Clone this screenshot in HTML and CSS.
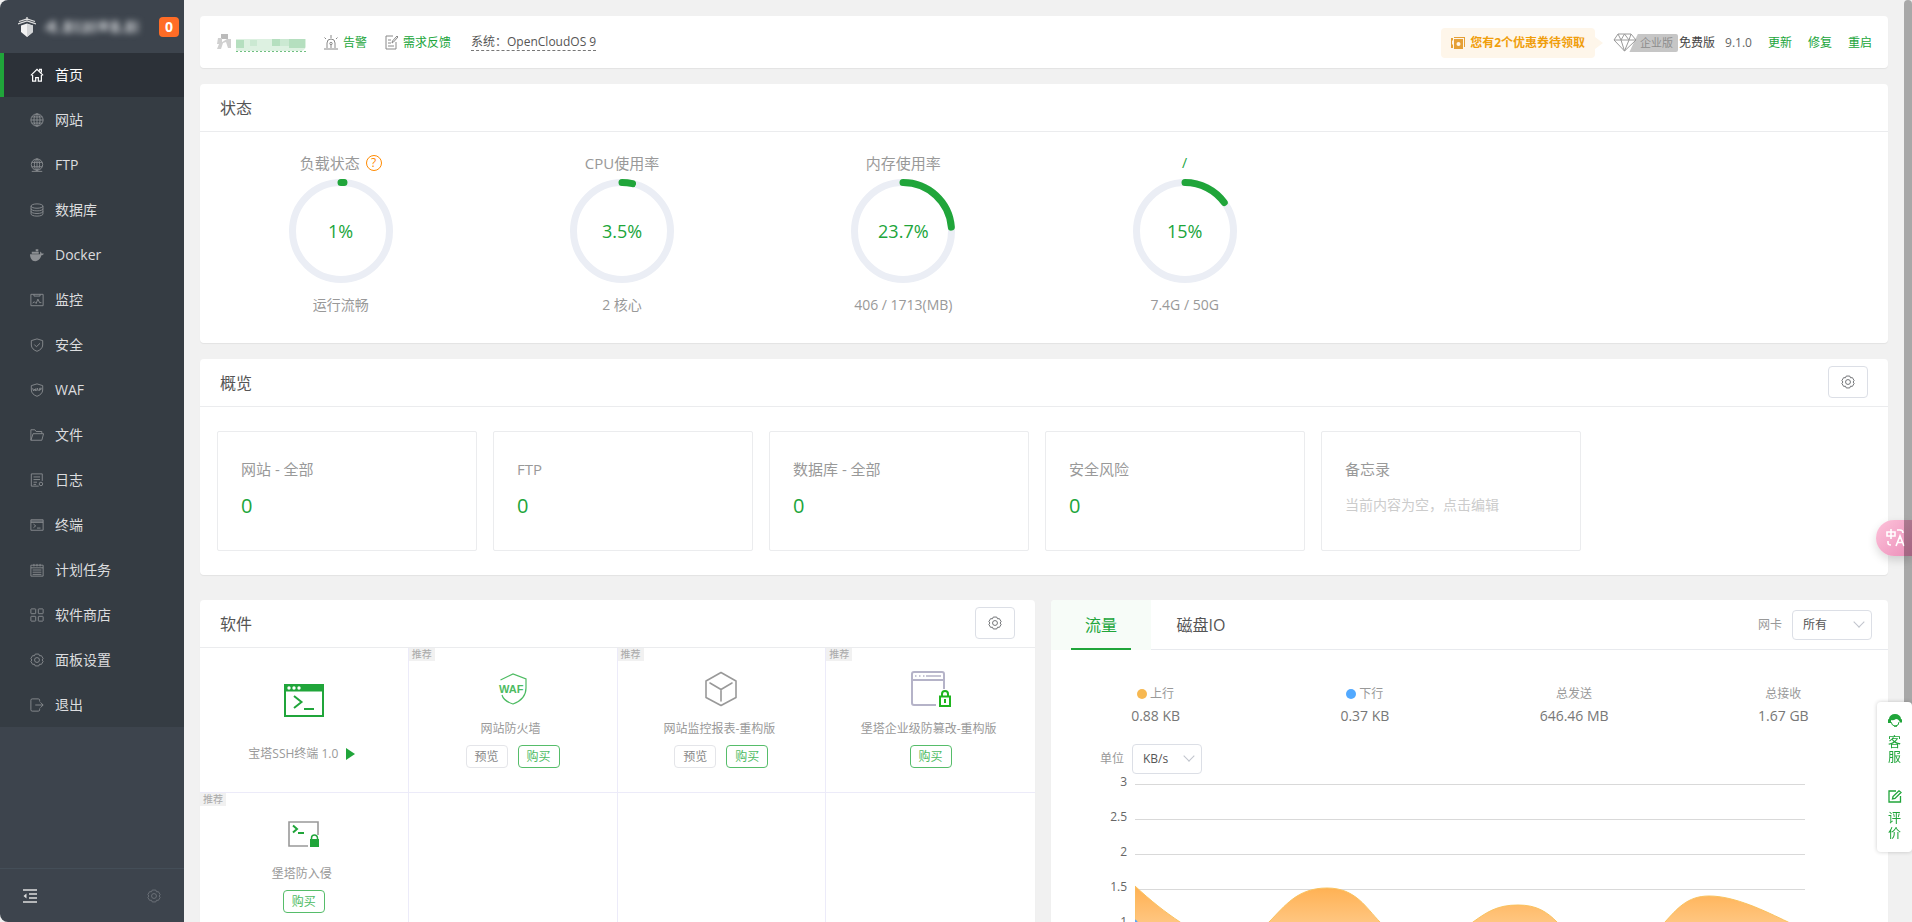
FILE: index.html
```
<!DOCTYPE html>
<html lang="zh-CN">
<head>
<meta charset="utf-8">
<title>首页</title>
<link rel="stylesheet" href="styles.css">
</head>
<body>
<svg class="defs" width="0" height="0" aria-hidden="true">
  <symbol id="gear" viewBox="0 0 16 16"><path d="M6 1.2h4l.9 2 2.1-.2 2 3.4L13.800 8l1.200 1.600-2 3.400-2.100-.2-.9 2H6l-.9-2-2.100.2-2-3.400L2.200 8 1 6.400 3 3l2.100.2z" stroke-linejoin="round"/><circle cx="8" cy="8" r="2.800"/></symbol>
</svg>
<div class="app">
  <aside class="sidebar">
    <header class="brand">
      <svg class="brand-logo" width="18" height="20" viewBox="0 0 18 20"><path d="M9 0v3M1 4.500 9 2l8 2.500M0 7l9-3 9 3" stroke="#ddd" stroke-width="1.300" fill="none"/><path d="M3 8.500l6-2 6 2V15l-6 5-6-5z" fill="#f2f2f2"/><path d="M9 7v13l6-5V8.500z" fill="#d2d4d6"/></svg>
      <svg class="brand-name" width="98" height="26" viewBox="0 0 98 26"><g fill="#a4a8ad"><path d="M2 15 9 7h5v12H9v-3H2zM17 16h3v3h-3zM22 7h8v12h-8zM33 7h4v12h-4zM39 8h9v11h-9v-4h5zM50 7h4v12h-4zM57 7h9v10h-9zM69 7h8v12h-8zM79 15h3v4h-3zM84 7h7v12h-7zM93 7h3v12h-3z"/></g></svg>
      <span class="count">0</span>
    </header>
    <nav class="menu">
      <a class="menu-item active" href="#"><svg viewBox="0 0 16 16"><path d="M1 8.500 8 1.500l7 7M3 8v7h3.500v-4h3v4H13V8M11 3V1.500h2V5"/></svg>首页</a>
      <a class="menu-item" href="#"><svg viewBox="0 0 16 16"><circle cx="8" cy="8" r="7"/><ellipse cx="8" cy="8" rx="3.500" ry="7"/><path d="M1 8h14M8 1v14M2 4.500h12M2 11.500h12"/></svg>网站</a>
      <a class="menu-item" href="#"><svg viewBox="0 0 16 16"><circle cx="8" cy="7.500" r="6.500"/><ellipse cx="8" cy="7.500" rx="3" ry="6.500"/><path d="M2 5h12M2 10h12M8 1v14M2 15.300h12"/></svg>FTP</a>
      <a class="menu-item" href="#"><svg viewBox="0 0 16 16"><ellipse cx="8" cy="3.500" rx="6.800" ry="2.500"/><path d="M1.200 3.500v9c0 1.400 3 2.500 6.800 2.500s6.800-1.100 6.800-2.500v-9M1.200 6.500C1.200 8 4 9 8 9s6.800-1 6.800-2.500M1.200 9.500C1.200 11 4 12 8 12s6.800-1 6.800-2.500"/></svg>数据库</a>
      <a class="menu-item" href="#"><svg viewBox="0 0 16 16"><path class="solid" d="M0 7h11.500c.2-1-.1-2 .5-3 .8.600 1.200 1.500 1.200 2.300.7-.1 1.800 0 2.800.3-.4 1-1.800 1.800-3 1.800C12 12 10 15 6 15 2 15 0 11 0 7zM2 4.200h8v2.300H2zM6.500 1.500h3v2.200h-3z"/></svg>Docker</a>
      <a class="menu-item" href="#"><svg viewBox="0 0 16 16"><path d="M1 1.500h14v13H1zM4.500 1.500v2h7v-2M3 11.500l2-1.500 2 2 2-5 2 4h2"/></svg>监控</a>
      <a class="menu-item" href="#"><svg viewBox="0 0 16 16"><path d="M8 1l6.500 2v5c0 3.500-3 6-6.500 7.200C4.500 14 1.500 11.500 1.500 8V3zM5 7.500l2.300 2.500L11.500 6"/></svg>安全</a>
      <a class="menu-item" href="#"><svg viewBox="0 0 16 16"><path d="M8 1l6.500 2v5c0 3.500-3 6-6.500 7.200C4.500 14 1.500 11.500 1.500 8V3zM3 6l1 3 1-2 1 2 .8-3M7.500 9l1-3 1 3M11 9V6h2.500M11 7.500h2"/></svg>WAF</a>
      <a class="menu-item" href="#"><svg viewBox="0 0 16 16"><path d="M1 14V2h4.500L7 4h6.500v2.500M1 14 3.500 6.500h12L13.500 14z"/></svg>文件</a>
      <a class="menu-item" href="#"><svg viewBox="0 0 16 16"><path d="M14 9V1H1.500v14H10M4 4.500h7.500M4 7.500h7.500M4 10.500h4M4 13h3"/><circle cx="12.500" cy="12.500" r="2"/></svg>日志</a>
      <a class="menu-item" href="#"><svg viewBox="0 0 16 16"><path d="M1 2h14v12H1zM1 3.500h14M1 5h14M4 7l2.500 2L4 11M8 11.500h4"/></svg>终端</a>
      <a class="menu-item" href="#"><svg viewBox="0 0 16 16"><path d="M1 2.500h14v12.500H1zM1 5.500h14M4.500 1v3M8 1v3M11.500 1v3M3 8h10M3 10.500h10M3 13h10" /></svg>计划任务</a>
      <a class="menu-item" href="#"><svg viewBox="0 0 16 16"><rect x="1" y="1" width="5.500" height="5.500" rx="0.500"/><rect x="9.500" y="1" width="5.500" height="5.500" rx="0.500"/><rect x="1" y="9.500" width="5.500" height="5.500" rx="0.500"/><rect x="9.500" y="9.500" width="5.500" height="5.500" rx="0.500"/></svg>软件商店</a>
      <a class="menu-item" href="#"><svg><use href="#gear"/></svg>面板设置</a>
      <a class="menu-item" href="#"><svg viewBox="0 0 16 16"><path d="M11 4V2.500C11 1.500 10.500 1 9.500 1H2.500C1.500 1 1 1.500 1 2.500v11c0 1 .5 1.500 1.500 1.500h7c1 0 1.500-.5 1.500-1.500V12M6 8h9M12 5l3 3-3 3"/></svg>退出</a>
    </nav>
    <footer class="side-foot">
      <button class="plain" aria-label="收起"><svg width="14" height="14" viewBox="0 0 14 14" fill="none" stroke="#ddd" stroke-width="1.500"><path d="M0 1h14M6 5h8M6 9h8M0 13h14"/><path d="M3.500 4.500v5L.5 7z" fill="#ddd" stroke="none"/></svg></button>
      <button class="plain" aria-label="设置"><svg width="14" height="14" fill="none" stroke="#70767d"><use href="#gear"/></svg></button>
    </footer>
  </aside>

  <main class="main">
    <section class="card topbar">
      <div class="top-left">
        <span class="account"><svg width="90" height="20" viewBox="0 0 90 20"><path d="M4 1h7v5H4z" fill="#bbb"/><path d="M1 5h4v6H0zM10 6h4v9h-3l-2-6-3 1-2 6H0l2-5z" fill="#d0d0d0"/><path d="M19 6h70v8q-2 5-8 4H19z" fill="#ddf1e1"/><path d="M19 7h8v8h-8zM55 6h8v7h-8zM72 6h16v9H72z" fill="#b5dfbf"/><path d="M33 7h7v6h-7zM63 6h9v7h-9z" fill="#cbe9d2"/><path d="M19 18.500h70" stroke="#6fbf80" stroke-dasharray="2 2"/></svg></span>
        <a class="icon-link" href="#"><svg width="14" height="15" viewBox="0 0 14 15"><path d="M3 13V8a4 4 0 0 1 8 0v5M0 14h14M7 3V0M2 4 .5 2.500M12 4l1.500-1.500M7 9.500V13"/><circle cx="7" cy="8.500" r="1.200"/></svg>告警</a>
        <a class="icon-link feedback" href="#"><svg width="13" height="15" viewBox="0 0 13 15"><path d="M8 1H1v13h10V7M3 5h3M3 8h3M3 11h6M7 8l.5-2L12 1l1 1-4.500 5z"/></svg>需求反馈</a>
        <span class="os">系统：OpenCloudOS 9</span>
      </div>
      <div class="top-right">
        <a class="coupon" href="#"><svg width="14" height="12" viewBox="0 0 14 12"><path d="M0 1h2v2L1 4v3l1 1v3H0zM3 2h9v10H3zM3 0h11v10h-1V1H3z" fill="#e5a036"/><circle cx="7.500" cy="7" r="2" fill="#fef6ea"/></svg>您有2个优惠券待领取</a>
        <span class="edition"><svg width="24" height="19" viewBox="0 0 24 19"><path d="M5 1h13l5 6-11.500 11L1 7zM1 7h22M5 1l3 6 3.500 11L16 7l2-6M8 7l3.500-6L16 7" fill="none" stroke="#9a9a9a"/></svg><span class="ent">企业版</span></span>
        <span class="free">免费版</span>
        <span class="version">9.1.0</span>
        <a href="#">更新</a><a href="#">修复</a><a href="#">重启</a>
      </div>
    </section>

    <section class="card status">
      <header class="card-head"><h2>状态</h2></header>
      <div class="gauges">
        <div class="gauge"><div class="g-label">负载状态<span class="help">?</span></div>
          <div class="ring"><svg viewBox="0 0 104 104"><circle class="track" cx="52" cy="52" r="48.500"/><circle class="value" cx="52" cy="52" r="48.500" pathLength="100" stroke-dasharray="1 99"/></svg><span>1%</span></div><div class="g-info">运行流畅</div></div>
        <div class="gauge"><div class="g-label">CPU使用率</div>
          <div class="ring"><svg viewBox="0 0 104 104"><circle class="track" cx="52" cy="52" r="48.500"/><circle class="value" cx="52" cy="52" r="48.500" pathLength="100" stroke-dasharray="3.500 96.500"/></svg><span>3.5%</span></div><div class="g-info">2 核心</div></div>
        <div class="gauge"><div class="g-label">内存使用率</div>
          <div class="ring"><svg viewBox="0 0 104 104"><circle class="track" cx="52" cy="52" r="48.500"/><circle class="value" cx="52" cy="52" r="48.500" pathLength="100" stroke-dasharray="23.700 76.300"/></svg><span>23.7%</span></div><div class="g-info">406 / 1713(MB)</div></div>
        <div class="gauge"><div class="g-label disk">/</div>
          <div class="ring"><svg viewBox="0 0 104 104"><circle class="track" cx="52" cy="52" r="48.500"/><circle class="value" cx="52" cy="52" r="48.500" pathLength="100" stroke-dasharray="15 85"/></svg><span>15%</span></div><div class="g-info">7.4G / 50G</div></div>
      </div>
    </section>

    <section class="card overview">
      <header class="card-head"><h2>概览</h2><button class="gear-btn" aria-label="概览设置"><svg width="14" height="14"><use href="#gear"/></svg></button></header>
      <div class="tiles">
        <div class="tile"><h3>网站 - 全部</h3><a href="#">0</a></div>
        <div class="tile"><h3>FTP</h3><a href="#">0</a></div>
        <div class="tile"><h3>数据库 - 全部</h3><a href="#">0</a></div>
        <div class="tile"><h3>安全风险</h3><a href="#">0</a></div>
        <div class="tile"><h3>备忘录</h3><p>当前内容为空，点击编辑</p></div>
      </div>
    </section>

    <div class="columns">
      <section class="card software">
        <header class="card-head"><h2>软件</h2><button class="gear-btn" aria-label="软件设置"><svg width="14" height="14"><use href="#gear"/></svg></button></header>
        <div class="apps">
          <div class="app-cell installed">
            <div class="app-icon"><svg width="40" height="34" viewBox="0 0 40 34"><rect x="1" y="1" width="38" height="31" fill="#fff" stroke="#20a53a" stroke-width="2"/><path d="M0 0h40v7.500H0z" fill="#20a53a"/><g fill="#fff"><circle cx="5" cy="4" r="1.700"/><circle cx="10" cy="4" r="1.700"/><circle cx="15" cy="4" r="1.700"/></g><path d="M10 12l7.500 6-7.500 6M20 25h10" fill="none" stroke="#20a53a" stroke-width="2"/></svg></div>
            <div class="app-name">宝塔SSH终端 1.0<svg width="9" height="12" viewBox="0 0 9 12"><path d="M0 0l9 6-9 6z" fill="#20a53a"/></svg></div>
          </div>
          <div class="app-cell"><span class="tag">推荐</span>
            <div class="app-icon"><svg width="30" height="34" viewBox="0 0 30 34"><path d="M2.500 8 15 2l13 5v9c0 7-5 13-13 16C9 30 5 27 4 23" fill="none" stroke="#4dbb62" stroke-width="1.200"/><text x="1" y="21" class="waf">WAF</text></svg></div>
            <div class="app-name">网站防火墙</div><div class="acts"><button class="btn">预览</button><button class="btn buy">购买</button></div></div>
          <div class="app-cell"><span class="tag">推荐</span>
            <div class="app-icon"><svg width="34" height="36" viewBox="0 0 34 36" fill="none" stroke="#999" stroke-width="1.600" stroke-linejoin="round" stroke-linecap="round"><path d="M17 1.500 32 10v16.500L17 34.500 2 26.500V10zM6 12l11 6.500L28 12M17 18.500V30"/></svg></div>
            <div class="app-name">网站监控报表-重构版</div><div class="acts"><button class="btn">预览</button><button class="btn buy">购买</button></div></div>
          <div class="app-cell"><span class="tag">推荐</span>
            <div class="app-icon"><svg width="40" height="36" viewBox="0 0 40 36"><g fill="none" stroke="#b5b3c8" stroke-width="2"><path d="M25 34H3q-2 0-2-2V3q0-2 2-2h28q2 0 2 2v15M1 9h32"/><path d="M4 5h1.500M8 5h1.500M12 5h1.500M15 5h15" stroke-width="1.500"/></g><g fill="none" stroke="#1fb51f" stroke-width="2"><path d="M29 25.500h10V35H29zM31 25v-2a3 3 0 0 1 6 0v2M34 28v4"/></g></svg></div>
            <div class="app-name">堡塔企业级防篡改-重构版</div><div class="acts"><button class="btn buy">购买</button></div></div>
          <div class="app-cell"><span class="tag">推荐</span>
            <div class="app-icon"><svg width="32" height="27" viewBox="0 0 32 27"><path d="M20 25H1V1h29v13" fill="none" stroke="#999" stroke-width="1.600"/><path d="M5 4.500 9 8l-4 3.500M10 12h6" fill="none" stroke="#20a53a" stroke-width="2"/><path d="M22 18h9v8h-9z" fill="#20a53a"/><path d="M23.500 18v-1a3 3 0 0 1 6 0v1" fill="none" stroke="#20a53a" stroke-width="1.500"/></svg></div>
            <div class="app-name">堡塔防入侵</div><div class="acts"><button class="btn buy">购买</button></div></div>
          <div class="app-cell"></div><div class="app-cell"></div><div class="app-cell"></div>
        </div>
      </section>

      <section class="card traffic">
        <header class="tabs">
          <button class="tab on">流量</button><button class="tab">磁盘IO</button>
          <div class="nic"><label for="nic">网卡</label><span class="select wide"><select id="nic"><option>所有</option></select></span></div>
        </header>
        <dl class="stats">
          <div><dt><i class="dot up"></i>上行</dt><dd>0.88 KB</dd></div>
          <div><dt><i class="dot down"></i>下行</dt><dd>0.37 KB</dd></div>
          <div><dt>总发送</dt><dd>646.46 MB</dd></div>
          <div><dt>总接收</dt><dd>1.67 GB</dd></div>
        </dl>
        <div class="unit"><label for="unit">单位</label><span class="select"><select id="unit"><option>KB/s</option></select></span></div>
        <div class="chart">
          <div class="axis"><span>3</span><span>2.5</span><span>2</span><span>1.5</span><span>1</span></div>
          <svg class="plot" viewBox="0 0 670 211" preserveAspectRatio="none">
            <defs><linearGradient id="fade" x1="0" y1="0" x2="0" y2="1"><stop offset="0" stop-color="#ffac48"/><stop offset="1" stop-color="#fff0dc"/></linearGradient></defs>
            <path d="M0 .5h670M0 35.500h670M0 70.500h670M0 105.500h670M0 140.500h670" stroke="#d9d9d9"/>
            <path d="M0 102C16 117 30 128 45 138C65 152 78 156 90 156C105 156 118 152 134 138C150 122 162 104 192 104C221 104 231 124 245 138C260 152 270 156 290 156C310 156 322 150 338 138C352 128 362 121 383 121C402 121 412 128 422 138C435 150 445 156 475 156C500 156 515 153 530 138C542 125 552 112 574 112C600 112 630 127 653 138L670 147V211H0z" fill="url(#fade)" fill-opacity=".95" stroke="#f9c25f"/>
            <path d="M0 136l3 4" stroke="#5aa7f7" stroke-width="2"/>
          </svg>
        </div>
      </section>
    </div>
  </main>

  <button class="translate" aria-label="翻译"><svg width="20" height="18" viewBox="0 0 20 18" fill="none" stroke="#fff" stroke-width="1.600"><path d="M1 3h8v4H1zM5 0v10M11 1h3q3 0 3 3M2 12v2q0 2 3 2M10 17l4-10 4 10M11.500 13.500h5"/></svg></button>
  <div class="scroll-thumb"></div>
  <aside class="dock">
    <a href="#"><svg width="14" height="13" viewBox="0 0 14 13"><path d="M1 5a6 5 0 0 1 12 0l1 .5v3h-2Q11 5 8 5 5 7 3 6v3H0V5.500z" fill="#20a53a"/><path d="M3 8q1 4 4 4 4 0 4-4M6 12.300h3" fill="none" stroke="#20a53a"/></svg><span>客服</span></a>
    <a href="#"><svg width="14" height="13" viewBox="0 0 14 13" fill="none" stroke="#20a53a" stroke-width="1.300"><path d="M8 1H1v11h11.500V6M4.500 9l.5-2.500L11 .8l2 1.700-6 6z"/></svg><span>评价</span></a>
  </aside>
</div>
</body>
</html>
```
FILE: styles.css
```
* { box-sizing: border-box; }
html, body { height: 100%; margin: 0; }
body {
  background: #f1f1f1;
  color: #666;
  font: 12px/20px "Open Sans", "Noto Sans CJK SC", sans-serif;
  overflow: hidden;
}
h2, h3, p, dl, dd { margin: 0; font-weight: 400; }
a { color: #20a53a; text-decoration: none; }
button, select { font: inherit; cursor: pointer; }
.defs { position: absolute; }
.app { display: flex; height: 100vh; overflow: hidden; }

/* sidebar */
.sidebar {
  flex: 0 0 184px;
  display: flex;
  flex-direction: column;
  background: #3d444d;
  border-radius: 8px 0 0 8px;
}
.brand { display: flex; align-items: center; height: 53px; padding: 0 5px 0 18px; }
.brand-name { margin-left: 6px; filter: blur(3px); }
.count {
  margin-left: auto;
  width: 20px;
  border-radius: 4px;
  background: #ff6c26;
  color: #fff;
  font-size: 14px;
  font-weight: 700;
  text-align: center;
}
.menu { background: #353c43; }
.menu-item {
  display: flex;
  align-items: center;
  gap: 11px;
  height: 45px;
  padding-left: 26px;
  border-left: 4px solid transparent;
  color: #dcdddf;
  font-size: 14px;
}
.menu-item svg { width: 14px; height: 14px; fill: none; stroke: #8d9094; }
.menu-item .solid { fill: #8d9094; stroke: none; }
.menu-item.active { height: 44px; background: #2c3138; border-color: #20a53a; color: #fff; }
.menu-item.active svg { stroke: #fff; stroke-width: 1.400; }
.side-foot {
  display: flex;
  justify-content: space-between;
  align-items: center;
  height: 54px;
  margin-top: auto;
  padding: 0 23px;
  border-top: 1px solid #444e58;
}
.plain { display: flex; padding: 0; border: 0; background: none; }

/* main column */
.main { flex: 1; min-width: 0; padding: 16px 24px 0 16px; }
.card { background: #fff; border-radius: 4px; box-shadow: 0 1px 1px rgba(0, 0, 0, .06); }
.card-head {
  display: flex;
  align-items: center;
  justify-content: space-between;
  height: 48px;
  padding: 0 20px;
  border-bottom: 1px solid #ebecee;
}
.card-head h2 { font-size: 16px; color: #555; }
.gear-btn {
  display: flex;
  align-items: center;
  justify-content: center;
  width: 40px;
  height: 32px;
  margin-bottom: 2px;
  padding: 0;
  border: 1px solid #dcdfe6;
  border-radius: 4px;
  background: #fff;
}
.gear-btn svg { fill: none; stroke: #606266; }

.topbar { display: flex; align-items: center; justify-content: space-between; height: 52px; padding: 1px 16px 0 17px; }
.top-left, .top-right, .icon-link, .coupon, .edition { display: flex; align-items: center; }
.account { display: flex; margin-right: 17px; }
.icon-link { gap: 5px; margin-right: 18px; }
.icon-link svg { fill: none; stroke: #888; }
.feedback { margin-right: 20px; }
.os { line-height: 16px; border-bottom: 1px dashed #777; color: #555; }
.top-right a { margin-left: 16px; }
.top-right .coupon {
  position: relative;
  gap: 5px;
  height: 30px;
  margin: 0 18px 0 0;
  padding: 0 10px;
  border-radius: 4px;
  background: #fef6ea;
  color: #f09e0c;
  font-weight: 700;
}
.coupon::after {
  content: "";
  position: absolute;
  left: 100%;
  border: 6px solid transparent;
  border-left: 8px solid #fef6ea;
}
.edition {
  height: 18px;
  background: linear-gradient(115deg, transparent 22px, #c6c6c6 23px);
  border-radius: 2px;
}
.ent { padding: 0 5px 0 3px; color: #8d8d8d; font-size: 11px; line-height: 18px; }
.free { margin: 0 10px 0 1px; color: #444; }

/* status gauges */
.status { margin-top: 16px; }
.gauges { display: grid; grid-template-columns: repeat(6, 1fr); padding: 21px 0 28px; color: #999; }
.gauge { display: flex; flex-direction: column; align-items: center; }
.g-label { display: flex; align-items: center; gap: 6px; height: 20px; margin-bottom: 6px; font-size: 15px; }
.g-label.disk { color: #20a53a; font-size: 14px; }
.help {
  width: 16px;
  height: 16px;
  border: 1px solid #ff8a00;
  border-radius: 50%;
  color: #ff8a00;
  font-size: 12px;
  line-height: 14px;
  text-align: center;
}
.ring { display: grid; place-items: center; }
.ring > * { grid-area: 1 / 1; }
.ring svg { width: 104px; height: 104px; transform: rotate(-90deg); }
.ring circle { fill: none; stroke-width: 7; }
.track { stroke: #ebeef5; }
.ring .value { stroke: #20a53a; stroke-linecap: round; }
.ring span { color: #20a53a; font-size: 18px; line-height: 24px; }
.g-info { margin-top: 12px; font-size: 14px; }

/* overview */
.overview { margin-top: 16px; }
.tiles { display: grid; grid-template-columns: repeat(6, 1fr); gap: 16px; padding: 24px 31px 24px 17px; }
.tile { height: 120px; padding: 27px 23px; border: 1px solid #ebecee; border-radius: 2px; }
.tile h3 { color: #999; font-size: 15px; }
.tile a { display: block; margin-top: 15px; font-size: 20px; line-height: 24px; }
.tile p { margin-top: 16px; color: #ccc; font-size: 14px; }

/* software */
.columns { display: grid; grid-template-columns: 1fr 1fr; gap: 16px; margin-top: 25px; }
.apps { display: grid; grid-template-columns: repeat(4, 1fr); }
.app-cell {
  position: relative;
  display: flex;
  flex-direction: column;
  align-items: center;
  height: 145px;
  padding-top: 23px;
  border-right: 1px solid #ecebf9;
  border-bottom: 1px solid #ecebf9;
}
.app-cell:nth-child(4n) { border-right: 0; }
.tag {
  position: absolute;
  left: 0;
  top: 0;
  padding: 0 3px;
  background: #f1f1f1;
  color: #aaa;
  font-size: 10px;
  line-height: 13px;
}
.app-icon { display: flex; align-items: center; height: 36px; }
.app-name { display: flex; align-items: center; gap: 8px; margin-top: 12px; padding-right: 4px; color: #999; }
.installed { padding-top: 35px; }
.installed .app-name { margin-top: 25px; }
.waf { fill: #4dbb62; font: 700 11px "Liberation Sans", sans-serif; }
.acts { display: flex; gap: 10px; margin-top: 6px; }
.btn {
  width: 42px;
  height: 23px;
  padding: 0;
  border: 1px solid #e4e5e9;
  border-radius: 4px;
  background: #fff;
  color: #888;
  line-height: 21px;
}
.btn.buy { border-color: #56bd6a; color: #4dbb62; }

/* traffic */
.tabs { display: flex; align-items: center; height: 50px; border-bottom: 1px solid #e8eaee; }
.tab {
  display: flex;
  flex-direction: column;
  justify-content: center;
  align-items: center;
  width: 100px;
  height: 50px;
  padding: 0;
  border: 0;
  background: none;
  color: #555;
  font-size: 16px;
}
.tab.on {
  border-radius: 4px 0 0;
  color: #20a53a;
  background: linear-gradient(#20a53a, #20a53a) 50% 100% / 60px 2px no-repeat #f7fcf8;
}
.nic { display: flex; align-items: center; gap: 10px; margin-left: auto; padding-right: 16px; color: #999; }
.select { position: relative; display: block; width: 70px; height: 30px; }
.select.wide { width: 80px; }
.select select {
  appearance: none;
  width: 100%;
  height: 100%;
  padding: 0 10px;
  border: 1px solid #dcdfe6;
  border-radius: 4px;
  background: #fff;
  color: #555;
}
.select::after {
  content: "";
  position: absolute;
  right: 9px;
  top: 8px;
  width: 7px;
  height: 7px;
  border: solid #c0c4cc;
  border-width: 0 1px 1px 0;
  transform: rotate(45deg);
}
.stats { display: grid; grid-template-columns: repeat(4, 1fr); padding-top: 34px; text-align: center; }
.stats dt { color: #999; }
.stats dd { margin-top: 2px; color: #777; font-size: 14px; }
.dot { display: inline-block; width: 10px; height: 10px; margin-right: 3px; border-radius: 50%; vertical-align: -1px; }
.up { background: #f7b851; }
.down { background: #52a9ff; }
.unit { display: flex; align-items: center; gap: 8px; margin-top: 18px; padding-left: 49px; color: #999; }
.chart { display: flex; gap: 8px; margin-top: 10px; padding: 0 83px 0 49px; }
.axis { display: flex; flex-direction: column; width: 27px; margin-top: -12px; text-align: right; }
.axis span { height: 35px; }
.plot { flex: 1; min-width: 0; height: 211px; }

/* floating controls */
.translate {
  position: fixed;
  right: 0;
  top: 520px;
  width: 36px;
  height: 36px;
  padding: 0 0 0 10px;
  border: 0;
  border-radius: 18px 0 0 18px;
  background: linear-gradient(135deg, #fdc3da, #ec8fba);
  box-shadow: 0 4px 10px rgba(0, 0, 0, .15);
}
.translate svg { display: block; }
.scroll-thumb {
  position: fixed;
  right: 0;
  top: 0;
  width: 8px;
  height: 710px;
  border-radius: 8px 8px 0 0;
  background: rgba(0, 0, 0, .3);
}
.dock {
  position: fixed;
  right: 0;
  top: 702px;
  display: flex;
  flex-direction: column;
  gap: 26px;
  width: 35px;
  padding: 12px 10px;
  border-radius: 4px;
  background: #fff;
  box-shadow: 0 0 4px rgba(0, 0, 0, .2);
}
.dock a { display: flex; flex-direction: column; align-items: center; gap: 7px; font-size: 13px; line-height: 15px; }
.dock span { width: 13px; }
```
